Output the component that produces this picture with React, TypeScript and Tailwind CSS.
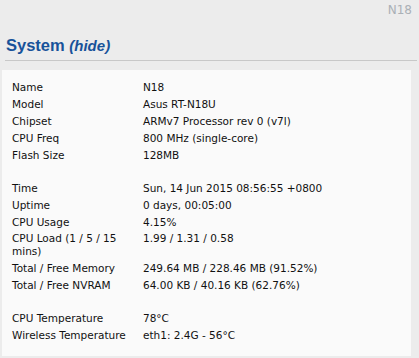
const rows: ([string, string] | null)[] = [
  ['Name', 'N18'],
  ['Model', 'Asus RT-N18U'],
  ['Chipset', 'ARMv7 Processor rev 0 (v7l)'],
  ['CPU Freq', '800 MHz (single-core)'],
  ['Flash Size', '128MB'],
  null,
  ['Time', 'Sun, 14 Jun 2015 08:56:55 +0800'],
  ['Uptime', '0 days, 00:05:00'],
  ['CPU Usage', '4.15%'],
  ['CPU Load (1 / 5 / 15 mins)', '1.99 / 1.31 / 0.58'],
  ['Total / Free Memory', '249.64 MB / 228.46 MB (91.52%)'],
  ['Total / Free NVRAM', '64.00 KB / 40.16 KB (62.76%)'],
  null,
  ['CPU Temperature', '78°C'],
  ['Wireless Temperature', 'eth1: 2.4G - 56°C'],
];

export default function App() {
  return (
    <div className="w-[419px] h-[358px] bg-[#ececec] font-['DejaVu_Sans',sans-serif] text-[10.5px] text-[#111] overflow-hidden">
      <div className="flex justify-end pr-[7px] pt-[3px] text-[#aab0b6] text-[12px] leading-[14px]">N18</div>
      <div className="mx-[5px] mt-[18px] mr-[2px] border-b border-[#c8c8c8] pb-[2px] pl-[1px] font-['Liberation_Sans',sans-serif]">
        <span className="text-[16.5px] font-bold text-[#18529a] leading-[20px]">System </span>
        <span className="text-[15px] font-bold italic text-[#18529a]">(hide)</span>
      </div>
      <div className="ml-[2px] mt-[9px] w-[409px] bg-[#fafafa] pl-[10px] pt-[9px] pb-[12px]">
        {rows.map((r, i) =>
          r === null ? (
            <div key={i} className="h-[16px]" />
          ) : (
            <div
              key={i}
              className={
                r[0].length > 20
                  ? 'grid grid-cols-[131px_1fr] py-[1px] leading-[13.5px]'
                  : 'grid grid-cols-[131px_1fr] py-[1.5px] leading-[14px]'
              }
            >
              <div className="pr-[6px]">{r[0]}</div>
              <div>{r[1]}</div>
            </div>
          )
        )}
      </div>
    </div>
  );
}
